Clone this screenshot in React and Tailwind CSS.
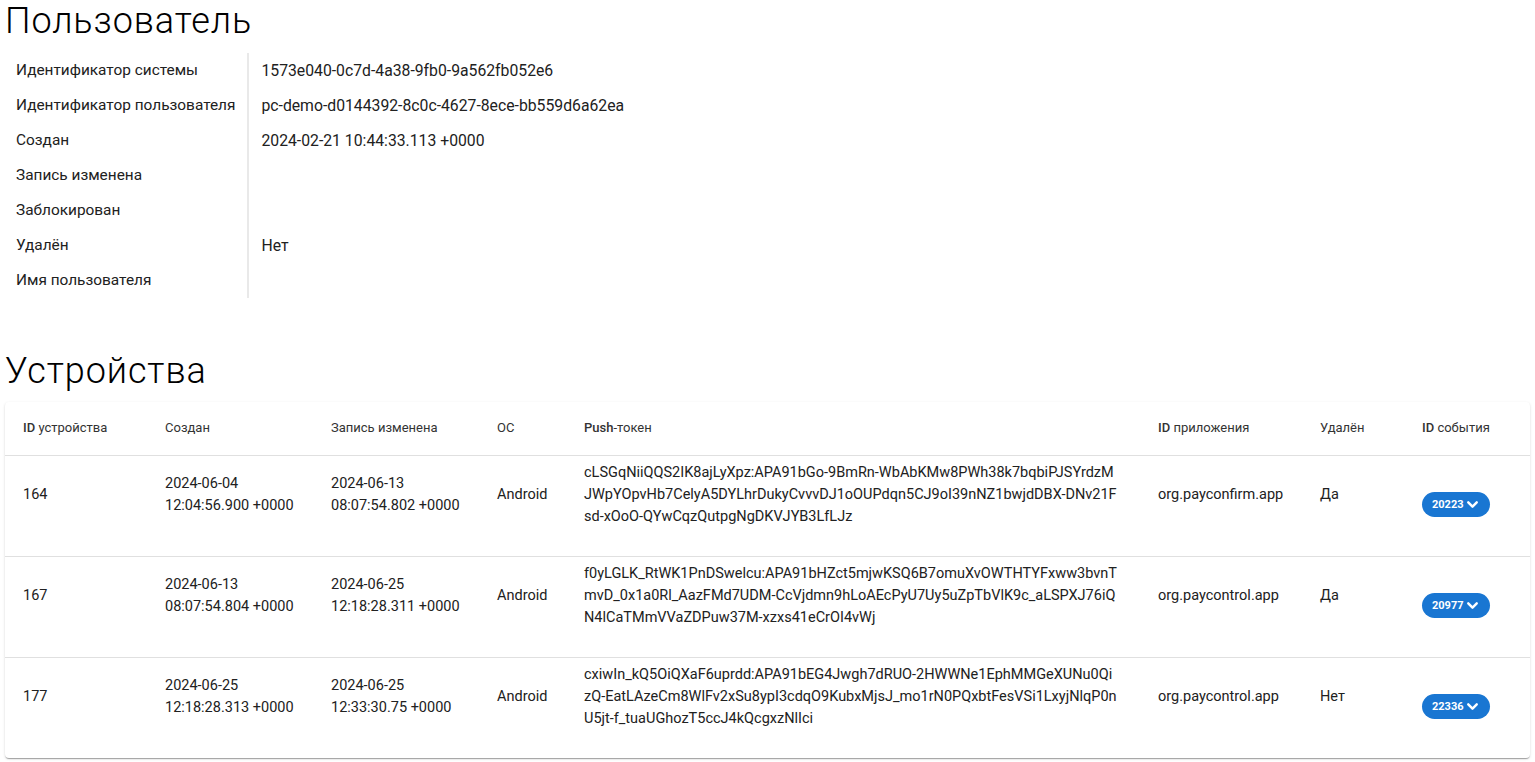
import React from 'react';
import { ChevronDown } from 'lucide-react';

const userInfo = [
  { label: 'Идентификатор системы', value: '1573e040-0c7d-4a38-9fb0-9a562fb052e6' },
  { label: 'Идентификатор пользователя', value: 'pc-demo-d0144392-8c0c-4627-8ece-bb559d6a62ea' },
  { label: 'Создан', value: '2024-02-21 10:44:33.113 +0000' },
  { label: 'Запись изменена', value: '' },
  { label: 'Заблокирован', value: '' },
  { label: 'Удалён', value: 'Нет' },
  { label: 'Имя пользователя', value: '' },
];

const devices = [
  {
    id: '164',
    created: ['2024-06-04', '12:04:56.900 +0000'],
    updated: ['2024-06-13', '08:07:54.802 +0000'],
    os: 'Android',
    token: [
      'cLSGqNiiQQS2IK8ajLyXpz:APA91bGo-9BmRn-WbAbKMw8PWh38k7bqbiPJSYrdzM',
      'JWpYOpvHb7CelyA5DYLhrDukyCvvvDJ1oOUPdqn5CJ9oI39nNZ1bwjdDBX-DNv21F',
      'sd-xOoO-QYwCqzQutpgNgDKVJYB3LfLJz',
    ],
    app: 'org.payconfirm.app',
    deleted: 'Да',
    event: '20223',
  },
  {
    id: '167',
    created: ['2024-06-13', '08:07:54.804 +0000'],
    updated: ['2024-06-25', '12:18:28.311 +0000'],
    os: 'Android',
    token: [
      'f0yLGLK_RtWK1PnDSwelcu:APA91bHZct5mjwKSQ6B7omuXvOWTHTYFxww3bvnT',
      'mvD_0x1a0Rl_AazFMd7UDM-CcVjdmn9hLoAEcPyU7Uy5uZpTbVlK9c_aLSPXJ76iQ',
      'N4lCaTMmVVaZDPuw37M-xzxs41eCrOI4vWj',
    ],
    app: 'org.paycontrol.app',
    deleted: 'Да',
    event: '20977',
  },
  {
    id: '177',
    created: ['2024-06-25', '12:18:28.313 +0000'],
    updated: ['2024-06-25', '12:33:30.75 +0000'],
    os: 'Android',
    token: [
      'cxiwIn_kQ5OiQXaF6uprdd:APA91bEG4Jwgh7dRUO-2HWWNe1EphMMGeXUNu0Qi',
      'zQ-EatLAzeCm8WlFv2xSu8ypI3cdqO9KubxMjsJ_mo1rN0PQxbtFesVSi1LxyjNlqP0n',
      'U5jt-f_tuaUGhozT5ccJ4kQcgxzNlIci',
    ],
    app: 'org.paycontrol.app',
    deleted: 'Нет',
    event: '22336',
  },
];

const colWidths = ['w-[142px]', 'w-[166px]', 'w-[166px]', 'w-[87px]', 'w-[574px]', 'w-[162px]', 'w-[102px]', 'w-[126px]'];

const Lines = ({ lines }) => (
  <>
    {lines.map(line => (
      <span key={line} className="block whitespace-nowrap">{line}</span>
    ))}
  </>
);

const EventBadge = ({ value }) => (
  <button className="mt-5 inline-flex items-center h-[25px] pl-[10px] pr-[10px] rounded-full bg-[#1976d2] text-white text-[11px] font-bold leading-none">
    {value}
    <ChevronDown className="w-[17px] h-[17px] -mr-[1px]" strokeWidth={3.4} />
  </button>
);

export default function App() {
  const th = 'text-left font-normal pl-[18px] pr-2 align-middle';
  const td = 'pl-[18px] pr-2 pt-[6px] pb-[28px] align-middle';

  return (
    <div className="min-h-screen bg-white px-[5px] pb-[5px] font-['Roboto',sans-serif] text-[#212121]">
      {/* User */}
      <h1 className="text-[36px] leading-[42px] font-light tracking-[0.9px] text-black">Пользователь</h1>
      <table className="mt-[11px] -ml-px border-collapse">
        <tbody>
          {userInfo.map(row => (
            <tr key={row.label} className="h-[35px]">
              <td className="px-3 border-r-2 border-[#e9e9e9] whitespace-nowrap text-[15.4px]">{row.label}</td>
              <td className="px-3 whitespace-nowrap text-[15.75px]">{row.value}</td>
            </tr>
          ))}
        </tbody>
      </table>

      {/* Devices */}
      <h1 className="mt-[52px] text-[36px] leading-[42px] font-light tracking-[0.9px] text-black">Устройства</h1>
      <div className="mt-[10px] bg-white rounded-[4px] shadow-[0px_2px_1px_-1px_rgba(0,0,0,0.2),0px_1px_1px_0px_rgba(0,0,0,0.14),0px_1px_3px_0px_rgba(0,0,0,0.12)]">
        <table className="w-full table-fixed border-collapse text-[14.5px] leading-[22px]">
          <colgroup>
            {colWidths.map((w, i) => (
              <col key={i} className={w} />
            ))}
          </colgroup>
          <thead>
            <tr className="h-[53px] border-b border-[#e0e0e0] text-[#333] text-[13px]">
              <th className={th}><span className="font-medium">ID</span> устройства</th>
              <th className={th}>Создан</th>
              <th className={th}>Запись изменена</th>
              <th className={th}>ОС</th>
              <th className={th}><span className="font-medium">Push</span>-токен</th>
              <th className={th}><span className="font-medium">ID</span> приложения</th>
              <th className={th}>Удалён</th>
              <th className={th}><span className="font-medium">ID</span> события</th>
            </tr>
          </thead>
          <tbody>
            {devices.map((d, i) => (
              <tr key={d.id} className={i < devices.length - 1 ? 'border-b border-[#e0e0e0]' : ''}>
                <td className={td}>{d.id}</td>
                <td className={td}><Lines lines={d.created} /></td>
                <td className={td}><Lines lines={d.updated} /></td>
                <td className={td}>{d.os}</td>
                <td className={td}><Lines lines={d.token} /></td>
                <td className={td}>{d.app}</td>
                <td className={td}>{d.deleted}</td>
                <td className={td}><EventBadge value={d.event} /></td>
              </tr>
            ))}
          </tbody>
        </table>
      </div>
    </div>
  );
}
